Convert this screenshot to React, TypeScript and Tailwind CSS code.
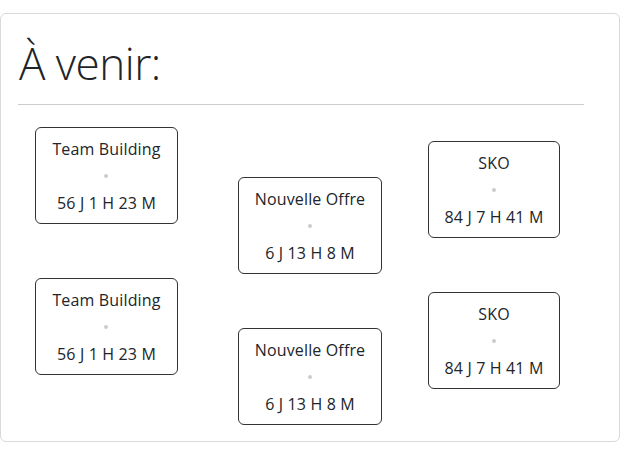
import React from "react";

type Ev = { title: string; time: string };

const cols: { evs: Ev[]; w: string; mt: string }[] = [
  { evs: [{ title: "Team Building", time: "56 J 1 H 23 M" }, { title: "Team Building", time: "56 J 1 H 23 M" }], w: "w-[177px]", mt: "mt-[22px]" },
  { evs: [{ title: "Nouvelle Offre", time: "6 J 13 H 8 M" }, { title: "Nouvelle Offre", time: "6 J 13 H 8 M" }], w: "w-[230px]", mt: "mt-[72px]" },
  { evs: [{ title: "SKO", time: "84 J 7 H 41 M" }, { title: "SKO", time: "84 J 7 H 41 M" }], w: "w-[138px]", mt: "mt-[36px]" },
];

function Box({ ev }: { ev: Ev }) {
  return (
    <div className="border border-[#333] rounded-[6px] px-[16px] pt-[9px] pb-[8px] flex flex-col items-center whitespace-nowrap tracking-[0.15px]">
      <div className="text-[16px] leading-[24px]">{ev.title}</div>
      <div className="h-[30px] flex items-center justify-center">
        <div className="w-[4px] h-[4px] rounded-full bg-[#ccc]" />
      </div>
      <div className="text-[16px] leading-[24px]">{ev.time}</div>
    </div>
  );
}

export default function App() {
  return (
    <div className="w-[627px] h-[451px] bg-white pt-[13px] pr-[7px]" style={{ fontFamily: '"Open Sans", sans-serif' }}>
      <div className="h-[429px] border border-[#d9d9d9] rounded-[6px] text-[#212529] pl-[17px] pr-[35px]">
        <h1 className="text-[44px] font-light leading-[54px] mt-[22px] ml-[1px] tracking-[-0.5px]">À venir:</h1>
        <hr className="border-0 border-t border-[#ccc] mt-[14px]" />
        <div className="flex">
          {cols.map((c, i) => (
            <div key={i} className={`${c.w} ${c.mt} flex flex-col items-center gap-[54px]`}>
              {c.evs.map((ev, j) => (
                <Box key={j} ev={ev} />
              ))}
            </div>
          ))}
        </div>
      </div>
    </div>
  );
}
